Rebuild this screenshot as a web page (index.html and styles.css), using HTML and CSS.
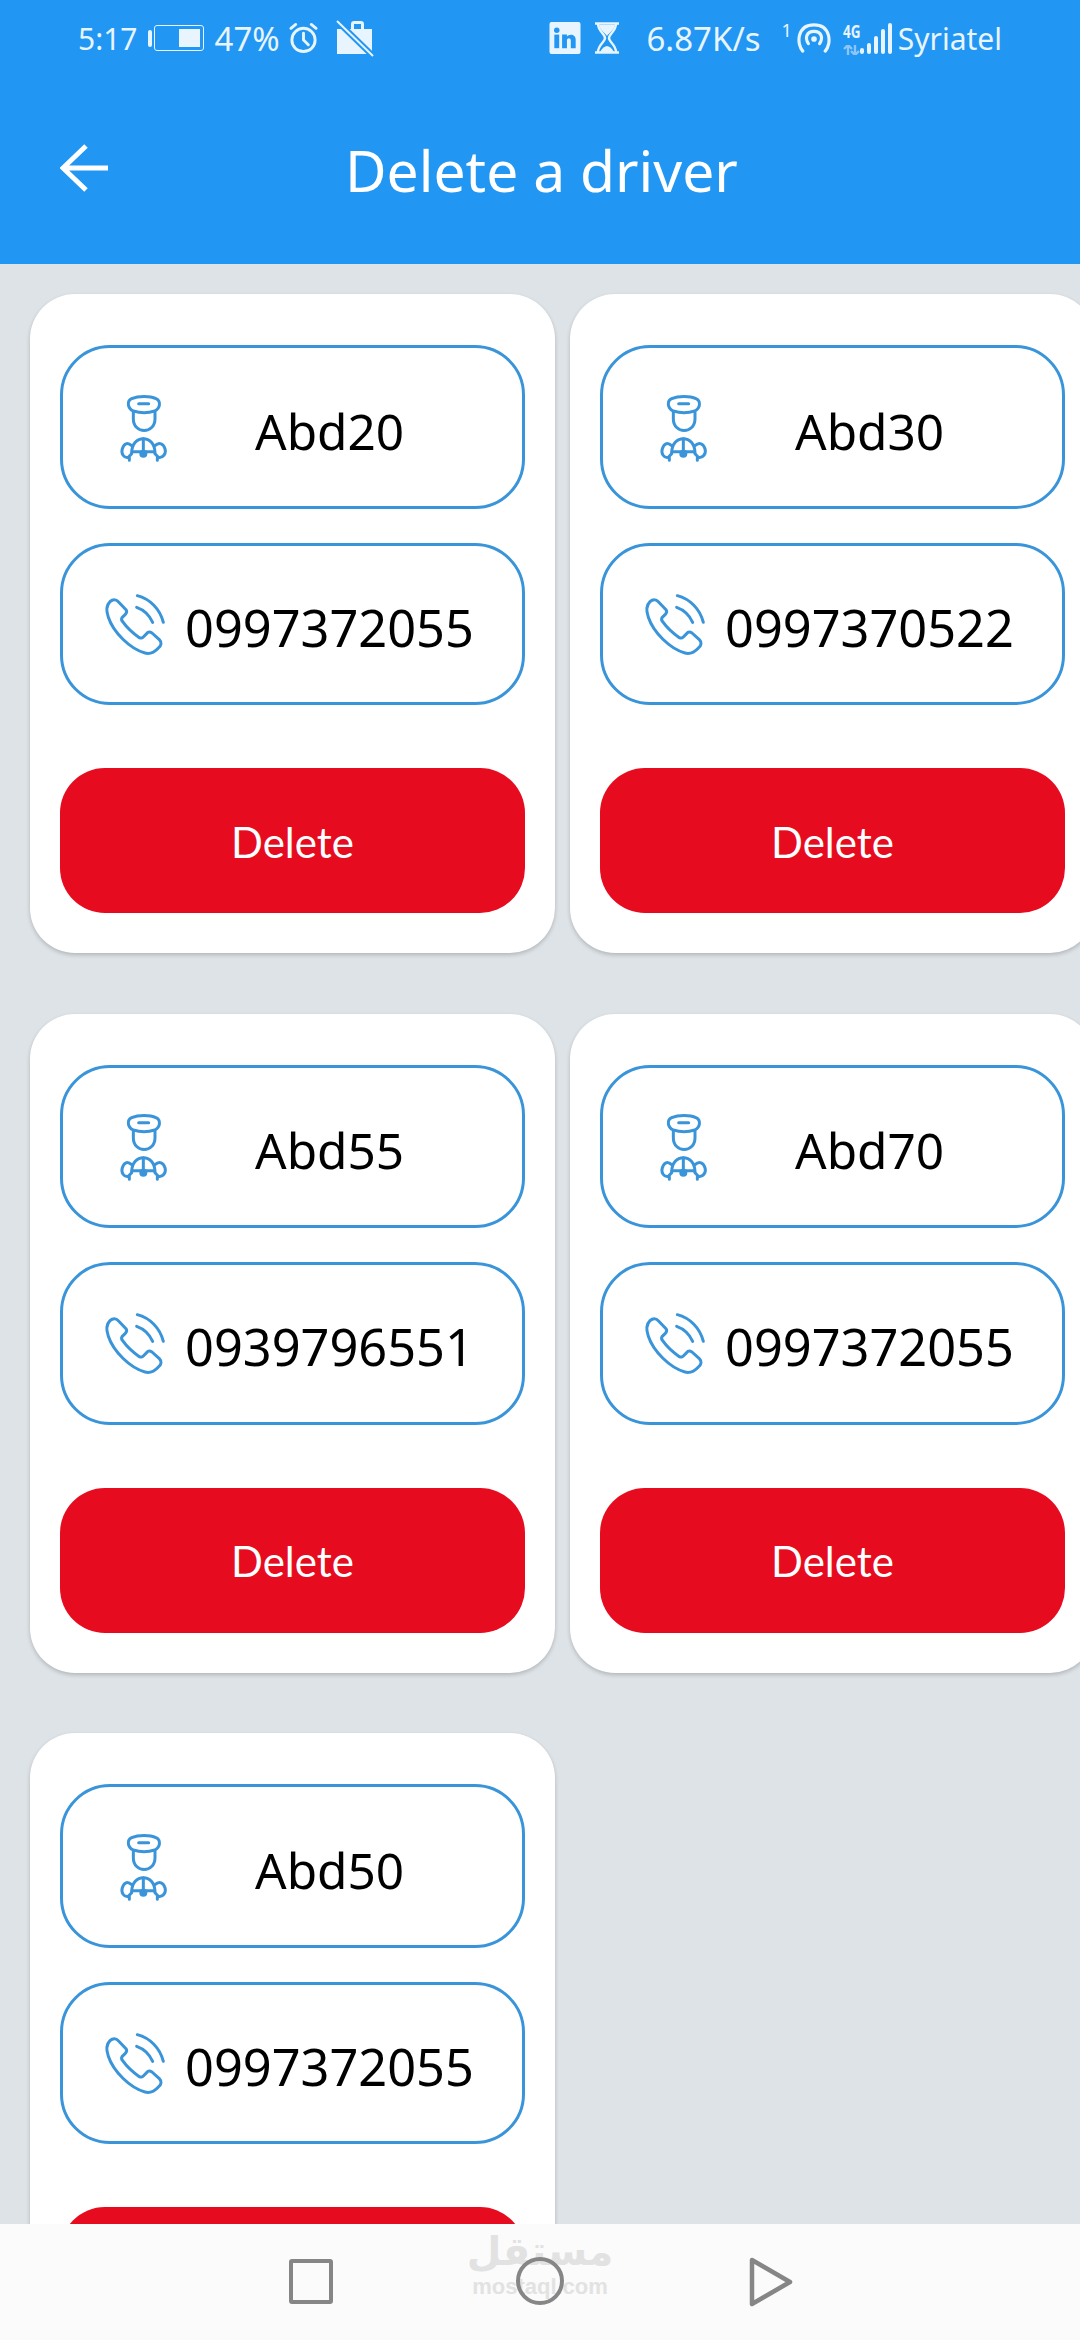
FILE: index.html
```html
<!DOCTYPE html>
<html lang="en">
<head>
  <meta charset="UTF-8" />
  <meta name="viewport" content="width=device-width, initial-scale=1.0"/>
  <title>Delete a driver</title>
  <link rel="stylesheet" href="styles.css">
</head>
<body>
  <svg class="defs" width="0" height="0">
    <symbol id="driver" viewBox="0 0 210 240">
      <g fill="none" stroke="#3a94d9" stroke-width="9" stroke-linejoin="round" stroke-linecap="round">
        <path d="M70 72C52 64 50 42 65 35C85 26 120 26 138 35C153 42 152 64 134 72C115 78 90 78 70 72Z"/>
        <path d="M86 50H116"/>
        <path d="M70 74V95C70 142 135 142 135 95V74"/>
        <path d="M65 198C65 170 82 155 100 155C118 155 135 170 135 198"/>
        <path d="M100 155V198"/>
        <path d="M66 194H134"/>
        <path d="M65 176C52 164 42 170 37 185C32 200 42 214 55 211L65 200"/>
        <path d="M135 176C148 164 160 170 165 185C170 200 158 214 145 211L135 200"/>
        <path d="M58 212V220M142 212V220"/>
      </g>
      <circle cx="100" cy="200" r="12" fill="#3a94d9"/>
    </symbol>
    <symbol id="phone" viewBox="0 0 210 210">
      <g fill="none" stroke="#3a94d9" stroke-width="9" stroke-linecap="round" stroke-linejoin="round">
        <path d="M30 38C38 30 48 30 55 38L78 62C82 68 80 72 76 76L66 86C64 90 64 94 68 98C82 118 98 132 118 146C122 148 126 148 130 144L140 134C144 128 150 128 156 132L178 152C186 160 184 170 176 176C165 188 150 196 135 192C90 180 40 130 25 85C18 65 18 50 30 38Z"/>
        <path d="M112 20C150 30 180 60 190 100"/>
        <path d="M110 55C130 62 148 78 158 100"/>
      </g>
    </symbol>
  </svg>

  <div class="phone-screen">
    <header class="app-header">
      <div class="status-bar">
        <div class="status-left">
          <span class="time">5:17</span>
          <span class="batt-tip"></span>
          <span class="battery"><span class="batt-level"></span></span>
          <span class="pct">47%</span>
          <svg class="alarm" width="31" height="32" viewBox="0 0 32 32" fill="none" stroke="#e8f4fe" stroke-width="3" stroke-linecap="round">
            <circle cx="16" cy="18" r="12"/>
            <path d="M16 11V18L21 23M3 6L8 2M29 6L24 2"/>
          </svg>
          <svg class="work-off" width="38" height="37" viewBox="0 0 38 37">
            <path d="M1 9H15V4C15 2 16 1 18 1H25C27 1 28 2 28 4V9H36V34H1Z" fill="#e8f4fe"/>
            <rect x="18" y="4" width="7" height="5" fill="#2196f3"/>
            <path d="M1 1L37 36" stroke="#2196f3" stroke-width="6"/>
            <path d="M1 1L37 36" stroke="#e8f4fe" stroke-width="2"/>
          </svg>
        </div>
        <div class="status-right">
          <svg class="linkedin" width="32" height="32" viewBox="0 0 32 33">
            <rect width="32" height="33" rx="2" fill="#e8f4fe"/>
            <rect x="5" y="13" width="5" height="14" fill="#2196f3"/>
            <circle cx="7.500" cy="8.500" r="2.800" fill="#2196f3"/>
            <path d="M13 13H18V15C20 12 27 12 27 18V27H22V19C22 16 18 16 18 19V27H13Z" fill="#2196f3"/>
          </svg>
          <svg class="hourglass" width="24" height="32" viewBox="0 0 24 32" fill="none" stroke="#e8f4fe" stroke-width="2.400">
            <path d="M0 1.500H24M0 30.500H24"/>
            <path d="M3 2C3 9 10 12 10 16C10 20 3 23 3 30M21 2C21 9 14 12 14 16C14 20 21 23 21 30"/>
            <path d="M4 3H20C19 8 14 11 12 14C10 11 5 8 4 3ZM5 30C7 26 10 24 12 24C14 24 17 26 19 30Z" fill="#e8f4fe" stroke="none"/>
          </svg>
          <span class="speed">6.87K/s</span>
          <span class="sim-num">1</span>
          <svg class="hotspot" width="34" height="30" viewBox="0 0 36 32" fill="none" stroke="#e8f4fe" stroke-width="3.400" stroke-linecap="round">
            <path d="M6 30C-1 22 0 2 18 2C36 2 37 22 30 30"/>
            <path d="M12 22C8 16 10 9 18 9C26 9 28 16 24 22"/>
            <circle cx="18" cy="17" r="3" fill="#e8f4fe" stroke="none"/>
          </svg>
          <span class="net">
            <span class="net-top">4G</span>
            <svg class="net-arrows" width="17" height="10" viewBox="0 0 17 10" fill="none" stroke="#8cc6f8" stroke-width="2.400">
              <path d="M5 10V1M1 4L5 0L9 4M12 0V9M8 6L12 10L16 6"/>
            </svg>
          </span>
          <span class="signal">
            <span class="bar b1"></span>
            <span class="bar b2"></span>
            <span class="bar b3"></span>
            <span class="bar b4"></span>
            <span class="bar b5"></span>
          </span>
          <span class="carrier">Syriatel</span>
        </div>
      </div>
      <div class="toolbar">
        <svg class="back" width="48" height="48" viewBox="0 0 48 48" fill="none" stroke="#fff" stroke-width="5">
          <path d="M26 2L3 24L26 46M3 24H48"/>
        </svg>
        <h1 class="title">Delete a driver</h1>
      </div>
    </header>

    <main class="driver-grid">
      <section class="driver-card">
        <div class="field name-field">
          <svg class="driver-icon"><use href="#driver"/></svg>
          <span>Abd20</span>
        </div>
        <div class="field phone-field">
          <svg class="phone-icon"><use href="#phone"/></svg>
          <span>0997372055</span>
        </div>
        <button class="delete-btn">Delete</button>
      </section>
      <section class="driver-card">
        <div class="field name-field">
          <svg class="driver-icon"><use href="#driver"/></svg>
          <span>Abd30</span>
        </div>
        <div class="field phone-field">
          <svg class="phone-icon"><use href="#phone"/></svg>
          <span>0997370522</span>
        </div>
        <button class="delete-btn">Delete</button>
      </section>
      <section class="driver-card">
        <div class="field name-field">
          <svg class="driver-icon"><use href="#driver"/></svg>
          <span>Abd55</span>
        </div>
        <div class="field phone-field">
          <svg class="phone-icon"><use href="#phone"/></svg>
          <span>0939796551</span>
        </div>
        <button class="delete-btn">Delete</button>
      </section>
      <section class="driver-card">
        <div class="field name-field">
          <svg class="driver-icon"><use href="#driver"/></svg>
          <span>Abd70</span>
        </div>
        <div class="field phone-field">
          <svg class="phone-icon"><use href="#phone"/></svg>
          <span>0997372055</span>
        </div>
        <button class="delete-btn">Delete</button>
      </section>
      <section class="driver-card">
        <div class="field name-field">
          <svg class="driver-icon"><use href="#driver"/></svg>
          <span>Abd50</span>
        </div>
        <div class="field phone-field">
          <svg class="phone-icon"><use href="#phone"/></svg>
          <span>0997372055</span>
        </div>
        <button class="delete-btn">Delete</button>
      </section>
    </main>

    <nav class="nav-bar">
      <div class="watermark">
        <span class="wm-ar">مستقل</span>
        <span class="wm-en">mostaql.com</span>
      </div>
      <span class="nav-square"></span>
      <span class="nav-circle"></span>
      <svg class="nav-back" width="44" height="50" viewBox="0 0 44 50" fill="none" stroke="#868686" stroke-width="4.500" stroke-linejoin="round">
        <path d="M3 3L41 25L3 47Z"/>
      </svg>
    </nav>
  </div>
</body>
</html>
```

FILE: styles.css
```css
* {
  box-sizing: border-box;
}

html,
body {
  margin: 0;
  height: 100%;
}

body {
  font-family: "Noto Sans", sans-serif;
  background-color: #dee3e7;
  overflow: hidden;
}

.defs {
  position: absolute;
}

.phone-screen {
  width: 1080px;
  height: 2340px;
  display: flex;
  flex-direction: column;
  overflow: hidden;
}

/* header */

.app-header {
  height: 264px;
  flex-shrink: 0;
  background-color: #2196f3;
  color: #fff;
}

.status-bar {
  height: 76px;
  display: flex;
  align-items: center;
  justify-content: space-between;
  padding: 0 78px;
  color: #e8f4fe;
  font-size: 30px;
}

.status-left,
.status-right {
  display: flex;
  align-items: center;
}

.batt-tip {
  width: 4px;
  height: 17px;
  margin-left: 10px;
  background-color: #e8f4fe;
  border-radius: 2px;
}

.battery {
  width: 50px;
  height: 26px;
  margin-left: 2px;
  padding: 3px;
  border: 1px solid #e8f4fe;
  border-radius: 3px;
  display: flex;
  justify-content: flex-end;
}

.batt-level {
  width: 21px;
  background-color: #e8f4fe;
}

.pct {
  margin-left: 11px;
  font-size: 33px;
}

.alarm {
  margin-left: 8px;
}

.work-off {
  margin-left: 17px;
}

.hourglass {
  margin-left: 14px;
}

.speed {
  margin-left: 27px;
  font-size: 33px;
}

.sim-num {
  margin: 0 0 16px 21px;
  font-size: 18px;
  line-height: 18px;
}

.hotspot {
  margin-left: 5px;
}

.net {
  margin-left: 12px;
  width: 17px;
  display: flex;
  flex-direction: column;
  font-size: 18px;
  font-weight: 700;
  line-height: 18px;
}

.net-top {
  transform: scaleX(0.75);
  transform-origin: left center;
  white-space: nowrap;
}

.net-arrows {
  margin-top: 5px;
}

.signal {
  display: flex;
  align-items: flex-end;
  gap: 3px;
  height: 32px;
}

.bar {
  width: 4px;
  background-color: #e8f4fe;
  border-radius: 2px;
}

.b1 { height: 6px; }
.b2 { height: 11px; }
.b3 { height: 18px; }
.b4 { height: 25px; }
.b5 { height: 31px; }

.carrier {
  margin-left: 6px;
}

.toolbar {
  height: 188px;
  padding-left: 60px;
  display: flex;
  align-items: center;
}

.back {
  margin-bottom: 4px;
}

.title {
  margin: 0 0 0 237px;
  font-size: 57px;
  font-weight: 400;
  line-height: 1;
}

/* cards */

.driver-grid {
  flex: 1;
  min-height: 0;
  display: grid;
  grid-template-columns: 525px 525px;
  grid-auto-rows: 659px;
  column-gap: 15px;
  row-gap: 60.500px;
  padding: 30px 0 0 30px;
  overflow: hidden;
}

.driver-card {
  background-color: #fff;
  border-radius: 45px;
  box-shadow: 0 2px 4px rgba(0, 0, 0, 0.2);
  padding: 51px 30px 40px;
  display: flex;
  flex-direction: column;
}

.field {
  display: flex;
  align-items: center;
  border: 3px solid #3a94d9;
  border-radius: 50px;
  color: #000;
}

.name-field {
  height: 164px;
  padding-left: 47px;
  font-size: 49.500px;
}

.name-field span {
  margin-left: 75px;
  padding-top: 8px;
}

.phone-field {
  height: 163px;
  margin-top: 34px;
  padding-left: 37px;
  font-size: 50.500px;
}

.phone-field span {
  margin-left: 15px;
  padding-top: 7px;
}

.driver-icon {
  width: 70px;
  height: 80px;
}

.phone-icon {
  width: 70px;
  height: 70px;
}

.delete-btn {
  height: 145px;
  margin-top: 63px;
  padding-top: 3px;
  border: 0;
  border-radius: 45px;
  background-color: #e60b1e;
  color: #fff;
  font-family: Lato, sans-serif;
  font-size: 42px;
}

/* bottom nav */

.nav-bar {
  position: fixed;
  left: 0;
  right: 0;
  bottom: 0;
  height: 116px;
  background-color: #fbfbfb;
}

.nav-square {
  position: absolute;
  left: 289px;
  top: 35px;
  width: 44px;
  height: 45px;
  border: 4.500px solid #868686;
  border-radius: 3px;
}

.nav-circle {
  position: absolute;
  left: 516px;
  top: 33px;
  width: 48px;
  height: 48px;
  border: 4.500px solid #868686;
  border-radius: 50%;
}

.nav-back {
  position: absolute;
  left: 749px;
  top: 33px;
}

.watermark {
  position: absolute;
  left: 475px;
  top: 2px;
  width: 130px;
  display: flex;
  flex-direction: column;
  align-items: center;
  color: #e2e2e2;
}

.wm-ar {
  font-family: "DejaVu Sans", sans-serif;
  font-size: 40px;
  font-weight: 700;
  line-height: 50px;
  white-space: nowrap;
}

.wm-en {
  font-family: "Liberation Sans", sans-serif;
  font-size: 22px;
  font-weight: 700;
  line-height: 22px;
}
```
